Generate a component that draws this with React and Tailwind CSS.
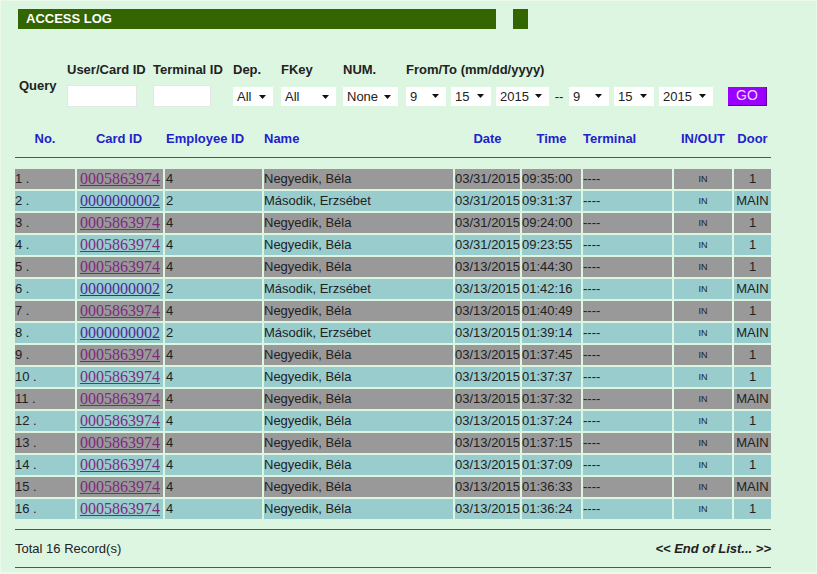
import React from "react";

const rows = [
  ["1", "0005863974", "4", "Negyedik, Béla", "03/31/2015", "09:35:00", "1"],
  ["2", "0000000002", "2", "Második, Erzsébet", "03/31/2015", "09:31:37", "MAIN"],
  ["3", "0005863974", "4", "Negyedik, Béla", "03/31/2015", "09:24:00", "1"],
  ["4", "0005863974", "4", "Negyedik, Béla", "03/31/2015", "09:23:55", "1"],
  ["5", "0005863974", "4", "Negyedik, Béla", "03/13/2015", "01:44:30", "1"],
  ["6", "0000000002", "2", "Második, Erzsébet", "03/13/2015", "01:42:16", "MAIN"],
  ["7", "0005863974", "4", "Negyedik, Béla", "03/13/2015", "01:40:49", "1"],
  ["8", "0000000002", "2", "Második, Erzsébet", "03/13/2015", "01:39:14", "MAIN"],
  ["9", "0005863974", "4", "Negyedik, Béla", "03/13/2015", "01:37:45", "1"],
  ["10", "0005863974", "4", "Negyedik, Béla", "03/13/2015", "01:37:37", "1"],
  ["11", "0005863974", "4", "Negyedik, Béla", "03/13/2015", "01:37:32", "MAIN"],
  ["12", "0005863974", "4", "Negyedik, Béla", "03/13/2015", "01:37:24", "1"],
  ["13", "0005863974", "4", "Negyedik, Béla", "03/13/2015", "01:37:15", "MAIN"],
  ["14", "0005863974", "4", "Negyedik, Béla", "03/13/2015", "01:37:09", "1"],
  ["15", "0005863974", "4", "Negyedik, Béla", "03/13/2015", "01:36:33", "MAIN"],
  ["16", "0005863974", "4", "Negyedik, Béla", "03/13/2015", "01:36:24", "1"],
];

const cols =
  "grid grid-cols-[60px_86px_97px_189px_65px_59px_89px_58px_37px] gap-x-[2px]";

const Select = ({ value, w }) => (
  <div
    className={`${w} h-[19px] bg-white flex items-center justify-between pl-[4px] pr-[7px] text-[13px] text-[#222]`}
  >
    <span>{value}</span>
    <svg width="7" height="4" viewBox="0 0 7 4">
      <path d="M0 0 H7 L3.5 4 Z" fill="#111" />
    </svg>
  </div>
);

const Field = ({ label, w, children }) => (
  <div className={`${w} flex flex-col`}>
    <span className="font-bold text-[13px] text-[#222] leading-[16px] whitespace-nowrap">
      {label}
    </span>
    <div className="h-[22px] mt-[7px] flex items-end pb-[1px]">{children}</div>
  </div>
);

const App = () => {
  return (
    <div
      className="min-h-screen bg-[#eaf9ec] p-[1px]"
      style={{ fontFamily: '"Liberation Sans", Arial, sans-serif' }}
    >
      <div className="bg-[#ddf6e1] h-[571px] w-[815px] pt-[8px] pl-[17px]">
        <div className="flex gap-[17px]">
          <div className="w-[478px] h-[20px] bg-[#336600] text-white font-bold text-[13px] flex items-center pl-[8px]">
            ACCESS LOG
          </div>
          <div className="w-[15px] h-[20px] bg-[#336600]" />
        </div>

        <div className="flex items-center mt-[33px] ml-[1px]">
          <div className="w-[48px] font-bold text-[13px] text-[#222] pt-[3px]">Query</div>
          <div className="flex">
            <div className="w-[86px] flex flex-col">
              <span className="font-bold text-[13px] text-[#222] leading-[16px] whitespace-nowrap">
                User/Card ID
              </span>
              <div className="w-[70px] h-[22px] mt-[7px] bg-white border border-[#e6e6e6]" />
            </div>
            <div className="w-[80px] flex flex-col">
              <span className="font-bold text-[13px] text-[#222] leading-[16px] whitespace-nowrap">
                Terminal ID
              </span>
              <div className="w-[58px] h-[22px] mt-[7px] bg-white border border-[#e6e6e6]" />
            </div>
            <Field label="Dep." w="w-[48px]">
              <Select value="All" w="w-[40px]" />
            </Field>
            <Field label="FKey" w="w-[62px]">
              <Select value="All" w="w-[55px]" />
            </Field>
            <Field label="NUM." w="w-[63px]">
              <Select value="None" w="w-[55px]" />
            </Field>
            <Field label="From/To (mm/dd/yyyy)" w="w-[370px]">
              <div className="flex items-center">
                <Select value="9" w="w-[40px]" />
                <div className="w-[5px]" />
                <Select value="15" w="w-[40px]" />
                <div className="w-[5px]" />
                <Select value="2015" w="w-[53px]" />
                <span className="w-[20px] text-center text-[13px] text-[#222]">--</span>
                <Select value="9" w="w-[40px]" />
                <div className="w-[5px]" />
                <Select value="15" w="w-[40px]" />
                <div className="w-[5px]" />
                <Select value="2015" w="w-[54px]" />
                <div className="w-[15px]" />
                <div className="w-[39px] h-[19px] bg-[#9900ff] border-r border-b border-[#5a0099] text-[#f0dcff] text-[14px] flex items-center justify-center">
                  GO
                </div>
              </div>
            </Field>
          </div>
        </div>

        <div className="w-[756px] -ml-[3px]">
          <div className={`${cols} mt-[24px] text-[13px] font-bold text-[#2222cc] leading-[16px]`}>
            <span className="text-center">No.</span>
            <span className="text-center pr-[2px]">Card ID</span>
            <span className="pl-[1px]">Employee ID</span>
            <span>Name</span>
            <span className="text-center">Date</span>
            <span className="text-center">Time</span>
            <span>Terminal</span>
            <span className="text-center">IN/OUT</span>
            <span className="text-center">Door</span>
          </div>
          <div className="border-t border-[#555] mt-[10px]" />

          <div className="mt-[11px] flex flex-col gap-y-[2px]">
            {rows.map((r, i) => {
              const bg = i % 2 === 0 ? "bg-[#999999]" : "bg-[#99cccc]";
              const base = `${bg} h-[20px] flex items-center text-[#222]`;
              const cell = `${base} text-[13px]`;
              return (
                <div key={r[0]} className={cols}>
                  <div className={cell}>{r[0]} .</div>
                  <div className={`${cell} pl-[3px]`}>
                    <a
                      href="#"
                      className={`underline text-[16px] ${
                        r[1] === "0000000002" ? "text-[#4b2aa0]" : "text-[#7d2a7e]"
                      }`}
                      style={{ fontFamily: '"Liberation Serif", "Times New Roman", serif' }}
                    >
                      {r[1]}
                    </a>
                  </div>
                  <div className={`${cell} pl-[1px]`}>{r[2]}</div>
                  <div className={cell}>{r[3]}</div>
                  <div className={cell}>{r[4]}</div>
                  <div className={cell}>{r[5]}</div>
                  <div className={cell}>----</div>
                  <div className={`${base} justify-center text-[9px] pt-[1px]`}>IN</div>
                  <div className={`${cell} justify-center`}>{r[6]}</div>
                </div>
              );
            })}
          </div>

          <div className="border-t border-[#555] mt-[10px]" />
          <div className="flex justify-between items-center h-[37px] text-[#222]">
            <span className="text-[13px]">Total 16 Record(s)</span>
            <span className="text-[13px] font-bold italic">&lt;&lt; End of List... &gt;&gt;</span>
          </div>
          <div className="border-t border-[#555]" />
        </div>
      </div>
    </div>
  );
};

export default App;
